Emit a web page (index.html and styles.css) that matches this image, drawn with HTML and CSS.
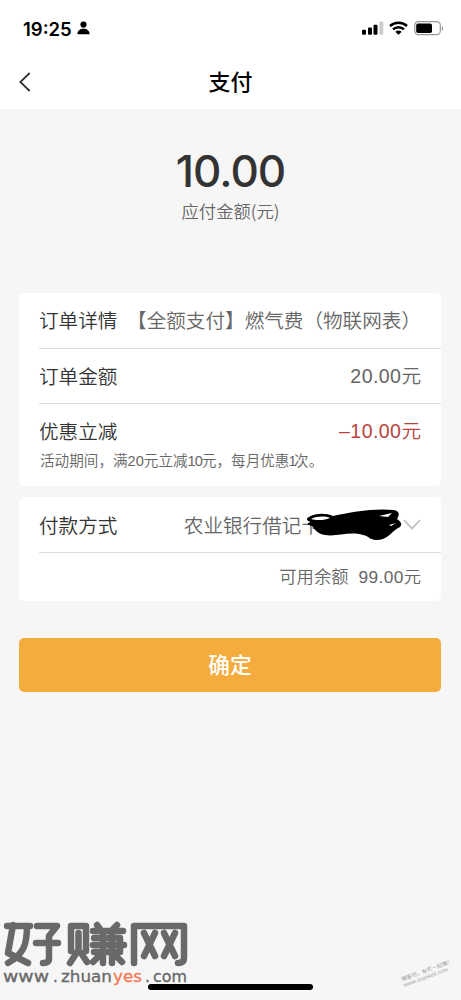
FILE: index.html
```html
<!DOCTYPE html>
<html lang="zh-CN">
<head>
<meta charset="utf-8">
<title>支付</title>
<link rel="stylesheet" href="styles.css">
</head>
<body>
<div class="screen">
  <header class="header">
    <div class="status">
      <div class="status-left">
        <span class="clock">19:25</span>
        <svg class="person" width="13" height="14" viewBox="0 0 13 14"><circle cx="6.5" cy="3.6" r="3.1"/><path d="M.4 13.2C.4 9.6 3 7.7 6.5 7.7s6.1 1.9 6.1 5.5Z"/></svg>
      </div>
      <div class="status-right">
        <svg width="22" height="14" viewBox="0 0 22 14"><rect x="0" y="8.8" width="4" height="5" rx="1"/><rect x="6" y="6.5" width="4" height="7.3" rx="1"/><rect x="11.5" y="3.7" width="4" height="10.1" rx="1"/><rect x="17.3" y=".5" width="4" height="13.3" rx="1" fill="#ccc"/></svg>
        <svg class="wifi" width="19" height="14" viewBox="0 0 19 14"><g fill="none" stroke="#000" stroke-width="2.5"><path d="M1 5C5.700.7 13.300.7 18 5"/><path d="M4 8.400C7.200 5.500 11.800 5.500 15 8.400"/></g><path d="M6.300 10.700C8.200 9.100 10.800 9.100 12.700 10.700L9.500 13.800Z"/></svg>
        <svg class="battery" width="30" height="15" viewBox="0 0 30 15"><rect x=".7" y=".7" width="25.600" height="13" rx="3.600" fill="none" stroke="#999" stroke-width="1.200"/><rect x="2.200" y="2.400" width="15.800" height="9.600" rx="1.800"/><path d="M27.700 5v4.600c2-.8 2-3.800 0-4.600Z" fill="#999"/></svg>
      </div>
    </div>
    <div class="nav">
      <svg class="back" width="12" height="20" viewBox="0 0 12 20"><path d="M10.700 1 1.300 10l9.400 9"/></svg>
      <h1 class="title">支付</h1>
    </div>
  </header>

  <section class="summary">
    <div class="amount">10.00</div>
    <div class="caption">应付金额(元)</div>
  </section>

  <section class="card details">
    <div class="row"><span class="label">订单详情</span><span class="value order-name">【全额支付】燃气费（物联网表）</span></div>
    <div class="row"><span class="label">订单金额</span><span class="value"><span class="num">20.00</span>元</span></div>
    <div class="row discount"><span class="label">优惠立减</span><span class="value red"><span class="num">–10.00</span>元</span></div>
    <p class="note">活动期间，满<span class="digits">20</span>元立减<span class="digits ten">10</span>元，每月优惠<span class="digits one">1</span>次。</p>
  </section>

  <section class="card method">
    <div class="row">
      <span class="label">付款方式</span>
      <span class="value bank">农业银行借记卡
        <svg class="scribble" width="98" height="36" viewBox="0 0 98 36"><path d="M3 9C10 5 20 5 27 8C45 4 68 0 88 2C93 3 94 6 91 11C96 14 97 18 92 20C85 24 82 32 70 32C64 32 63 28 57 27C43 23 31 29 19 27C11 26 9 21 6 18C1 17 0 15 5 14C0 13 0 10 3 9Z"/><g><path d="M5 11C11 8 19 8 24 10C20 12 11 13 5 11Z"/><path d="m73 8 13-3-4 4Z"/><path d="m83 17 7-2-5 3Z"/></g></svg>
      </span>
      <svg class="chevron" width="18" height="11" viewBox="0 0 18 11"><path d="m1 1 8 8.500L17 1"/></svg>
    </div>
    <div class="balance"><span>可用余额</span><span><span class="num">99.00</span>元</span></div>
  </section>

  <button class="confirm">确定</button>

  <div class="home-bar"></div>

  <div class="site-mark">
    <svg width="188" height="48" viewBox="0 0 188 48"><g class="logo-strokes">
      <path d="M4 5h23M10 4 5 32l20 10M24 5c0 18-3 28-19 37"/>
      <path d="M34 5h20L46 15v23q0 4-6 4M33 22h22"/>
      <path d="M68 30V5h15v25M75.500 12v17L67 42M78 32l6 9"/>
      <path d="m94 4 3 4M114 4l-4 4M90 10h30M91 17h26v14H91M90 24h31M100 11v31M109 11v31M99 32 90 41M110 32l9 9"/>
      <path d="M131 42V5h50v32q0 5-6 5M141 12l11 23M152 12 141 35M161 12l11 23M172 12 161 35"/>
    </g></svg>
    <svg class="url" width="188" height="18" viewBox="0 0 188 18">
      <text y="13" lengthAdjust="spacingAndGlyphs"><tspan x="0" textLength="46" lengthAdjust="spacingAndGlyphs">www</tspan><tspan x="50">.</tspan><tspan x="58" textLength="51" lengthAdjust="spacingAndGlyphs">zhuan</tspan><tspan x="110" class="yes" textLength="29" lengthAdjust="spacingAndGlyphs">yes</tspan><tspan x="142">.</tspan><tspan x="150" textLength="34" lengthAdjust="spacingAndGlyphs">com</tspan></text>
    </svg>
  </div>

  <div class="stamp"><span>赚客吧，有奖一起赚！</span><span>www.zuanke8.com</span></div>
</div>
</body>
</html>
```
FILE: styles.css
```css
* { box-sizing: border-box; }
body { margin: 0; background: #f6f6f6; font-family: "Noto Sans CJK SC", sans-serif; font-weight: 350; color: #333; }
.screen { position: relative; width: 461px; height: 1000px; overflow: hidden; display: flex; flex-direction: column; }
.header { height: 109px; flex: none; background: #fff; }
.status { height: 55px; display: flex; justify-content: space-between; padding: 20px 17px 0 23px; }
.status-left { display: flex; align-items: flex-start; height: 18px; }
.clock { width: 50px; font: 600 18.500px/18px Inter, sans-serif; color: #000; }
.person { margin: 1px 0 0 4px; }
.status-right { display: flex; align-items: flex-start; padding-top: 1px; }
.wifi { margin-left: 5px; }
.battery { margin-left: 6px; }
.nav { height: 54px; display: grid; grid-template-columns: 40px 1fr 40px; align-items: center; padding: 0 19px; }
.back { fill: none; stroke: #333; stroke-width: 1.800; }
.title { margin: 0; padding-bottom: 4px; font-size: 22px; font-weight: 500; line-height: 30px; text-align: center; color: #000; }
.summary { height: 184px; flex: none; padding-top: 35px; text-align: center; }
.amount { font: 500 44px/54px Inter, sans-serif; letter-spacing: -1px; color: #333; }
.caption { font-size: 17.300px; line-height: 25px; color: #666; }
.num { font-family: "Liberation Sans", Arial, sans-serif; font-weight: 400; letter-spacing: .4px; }
.digits { font-family: "Liberation Sans", Arial, sans-serif; font-weight: 400; }
.ten { letter-spacing: -1px; }
.one { letter-spacing: -2.500px; margin-left: -1px; }
.card { width: 422px; margin-left: 19px; padding-left: 20px; flex: none; background: #fff; border-radius: 5px; }
.details { height: 193px; }
.row { height: 55.500px; display: flex; align-items: center; justify-content: space-between; padding-right: 20px; border-bottom: 1px solid #ddd; font-size: 19.600px; line-height: 28px; white-space: nowrap; }
.label { color: #333; }
.value { color: #666; }
.discount { height: 53px; border-bottom: 0; }
.value.red { color: #b9433e; }
.note { margin: -7px 0 0 1px; font-size: 14.600px; line-height: 20px; color: #666; }
.method { height: 104px; margin-top: 11px; }
.method .row { height: 56px; }
.bank { position: relative; margin-left: auto; margin-right: 82px; }
.scribble { position: absolute; left: 122px; top: -3px; }
.scribble g { fill: #fff; }
.chevron { fill: none; stroke: #bbb; stroke-width: 1.600; }
.balance { display: flex; justify-content: flex-end; gap: 10px; padding: 11px 20px 0 0; font-size: 17.300px; line-height: 24px; color: #666; }
.confirm { width: 422px; height: 54px; flex: none; margin: 37px 0 0 19px; padding: 0 0 2px; border: 0; border-radius: 5px; background: #f4ac3f; color: #fff; font: 500 21.700px/30px "Noto Sans CJK SC", sans-serif; }
.home-bar { position: absolute; left: 148px; top: 984px; width: 165px; height: 6px; border-radius: 3px; background: #000; }
.site-mark { position: absolute; left: 3px; top: 921px; display: flex; flex-direction: column; }
.logo-strokes { fill: none; stroke: #696969; stroke-width: 6.500; stroke-linecap: round; stroke-linejoin: round; }
.url { font: 400 15px "DejaVu Sans", sans-serif; fill: #696969; stroke: #696969; stroke-width: .3; }
.yes { fill: #f47752; stroke: #f47752; }
.stamp { position: absolute; left: 401px; top: 967px; display: flex; flex-direction: column; transform: rotate(-20deg); font-size: 5.400px; line-height: 6px; color: #999; white-space: nowrap; }
```
